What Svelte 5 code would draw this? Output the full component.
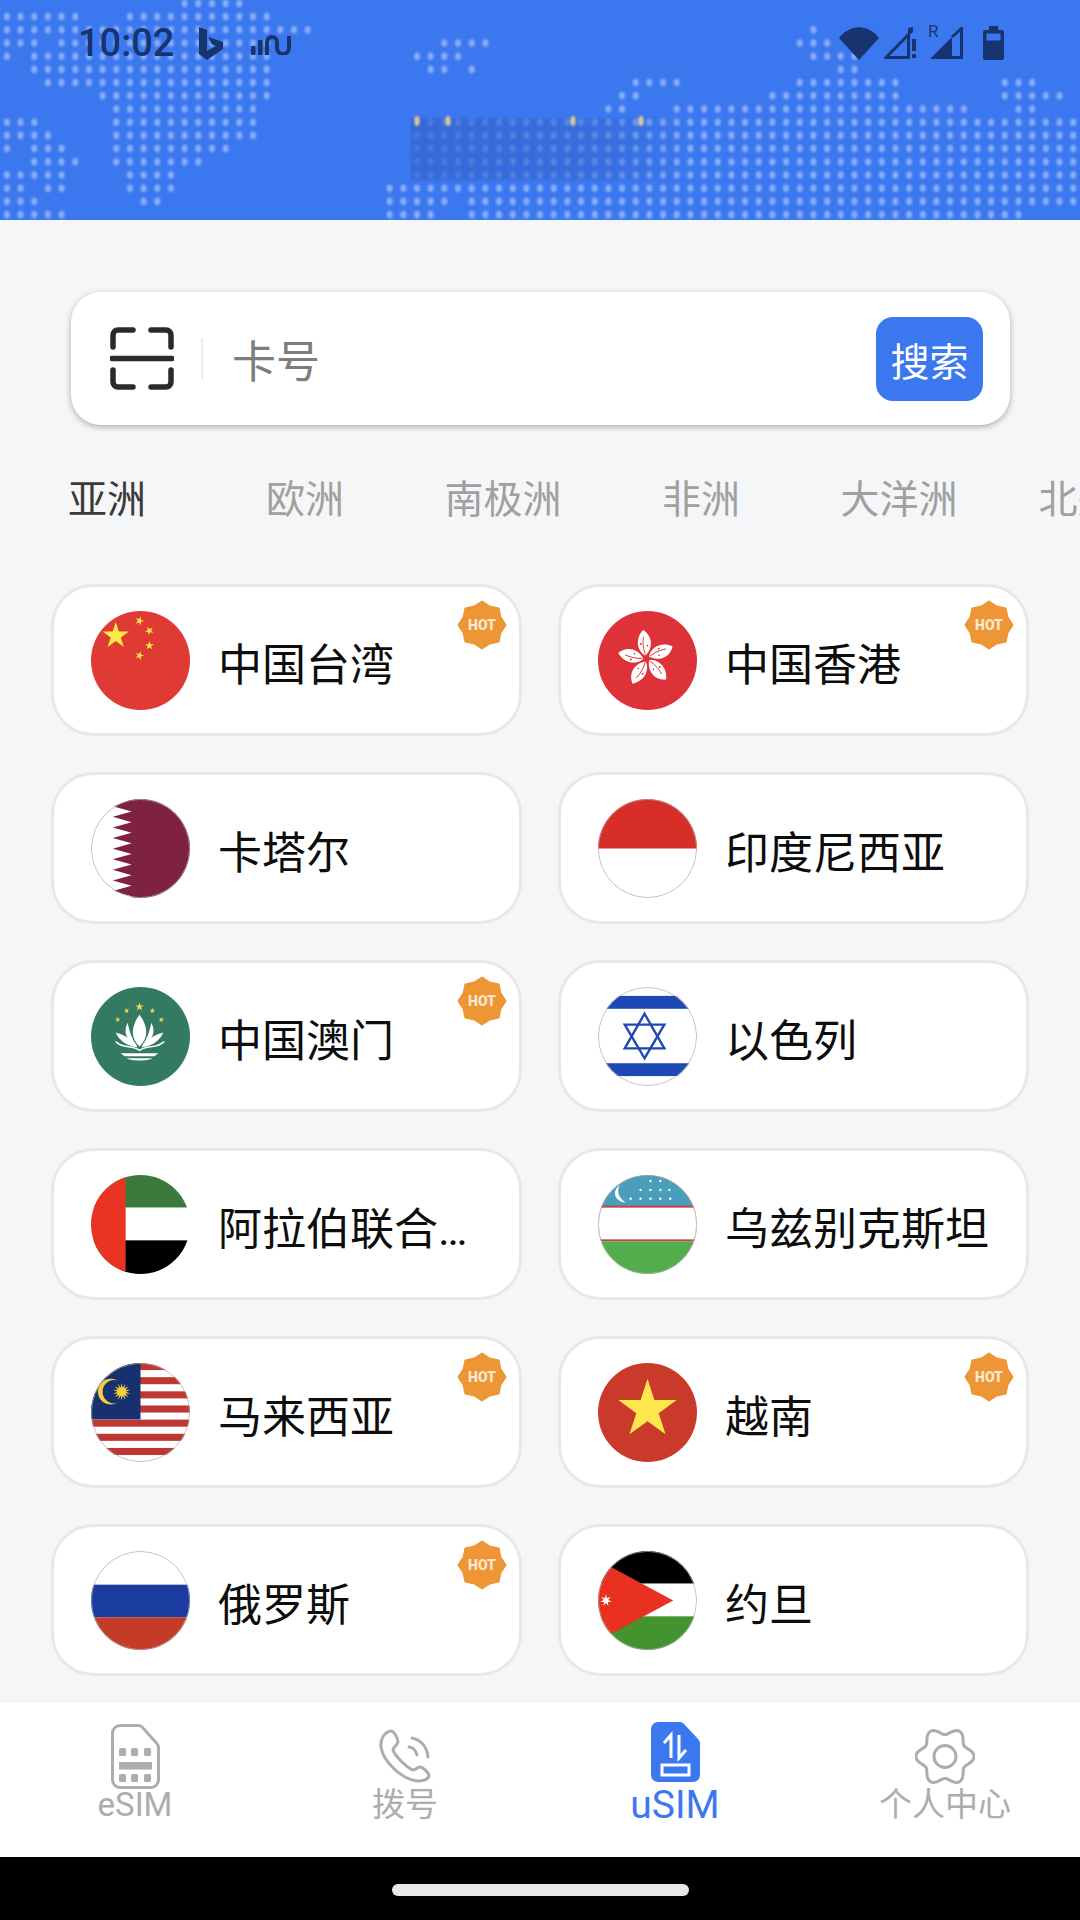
<script>
    const tabs = ["亚洲", "欧洲", "南极洲", "非洲", "大洋洲", "北美洲"];

    const countries = [
        { name: "中国台湾", flag: "cn", hot: true },
        { name: "中国香港", flag: "hk", hot: true },
        { name: "卡塔尔", flag: "qa" },
        { name: "印度尼西亚", flag: "id" },
        { name: "中国澳门", flag: "mo", hot: true },
        { name: "以色列", flag: "il" },
        { name: "阿拉伯联合酋长国", flag: "ae" },
        { name: "乌兹别克斯坦", flag: "uz" },
        { name: "马来西亚", flag: "my", hot: true },
        { name: "越南", flag: "vn", hot: true },
        { name: "俄罗斯", flag: "ru", hot: true },
        { name: "约旦", flag: "jo" },
    ];

    // dot map: one list of [first, last] column ranges per row
    const mapRows = [
        [[13, 17]],
        [[0, 5], [9, 19]],
        [[0, 22], [59, 59]],
        [[0, 2], [4, 19], [32, 35], [58, 60]],
        [[0, 0], [2, 19], [30, 33], [59, 62]],
        [[2, 19], [31, 32], [34, 34], [61, 62]],
        [[3, 19], [46, 49], [58, 65], [73, 75]],
        [[7, 19], [45, 46], [56, 65], [73, 77]],
        [[8, 18], [44, 45], [49, 70], [74, 75]],
        [[0, 2], [8, 18], [30, 78]],
        [[0, 3], [8, 18], [30, 78]],
        [[0, 0], [2, 4], [8, 16], [30, 78]],
        [[2, 5], [8, 14], [30, 78]],
        [[0, 4], [9, 12], [30, 78]],
        [[0, 1], [3, 4], [9, 12], [28, 78]],
        [[0, 2], [10, 11], [28, 32], [34, 78]],
        [[0, 4], [28, 31], [34, 74]],
    ];

    const dots = [];
    mapRows.forEach((ranges, row) => {
        for (const [from, to] of ranges) {
            for (let col = from; col <= to; col++) {
                dots.push({ x: 6.9 + col * 13.67, y: 3.4 + row * 13.2 });
            }
        }
    });

    function star(cx, cy, r, turn = 0) {
        const pts = [];
        for (let i = 0; i < 10; i++) {
            const a = ((i * 36 + turn - 90) * Math.PI) / 180;
            const d = i % 2 ? r * 0.382 : r;
            pts.push(`${(cx + d * Math.cos(a)).toFixed(2)},${(cy + d * Math.sin(a)).toFixed(2)}`);
        }
        return pts.join(" ");
    }

    function burst(cx, cy, outer, inner, points) {
        const pts = [];
        for (let i = 0; i < points * 2; i++) {
            const a = (i * Math.PI) / points - Math.PI / 2;
            const d = i % 2 ? inner : outer;
            pts.push(`${(cx + d * Math.cos(a)).toFixed(2)},${(cy + d * Math.sin(a)).toFixed(2)}`);
        }
        return pts.join(" ");
    }

    function gearPath() {
        let d = "";
        for (let i = 0; i < 120; i++) {
            const a = (i * 3 * Math.PI) / 180;
            const r = 25.5 + 3.6 * Math.cos(6 * a);
            d += `${i ? "L" : "M"}${(30 + r * Math.cos(a)).toFixed(2)} ${(29.5 + r * Math.sin(a)).toFixed(2)}`;
        }
        return d + "Z";
    }

    const qatarEdge = (() => {
        const pts = ["100,0", "41,0"];
        for (let i = 0; i < 9; i++) {
            const top = 2 + i * 10.7;
            pts.push(`22,${top + 5.35}`, `41,${top + 10.7}`);
        }
        pts.push("41,100", "100,100");
        return pts.join(" ");
    })();

    const uzStars = [
        [53, 6], [63, 6],
        [43, 15], [53, 15], [63, 15], [72, 15],
        [33, 24], [43, 24], [53, 24], [63, 24], [73, 24],
    ];
</script>

{#snippet flagArt(code)}
    <svg class="flag" viewBox="0 0 100 100">
        {#if code === "cn"}
            <rect width="100" height="100" fill="#df3a33" />
            <polygon points={star(25, 25, 14)} fill="#fbe946" />
            <polygon points={star(49, 10, 4.6, 20)} fill="#fbe946" />
            <polygon points={star(59, 20, 4.6, 45)} fill="#fbe946" />
            <polygon points={star(59, 35, 4.6, 0)} fill="#fbe946" />
            <polygon points={star(49, 45, 4.6, 20)} fill="#fbe946" />
        {:else if code === "hk"}
            <rect width="100" height="100" fill="#dd3237" />
            {#each [0, 72, 144, 216, 288] as turn}
                <g transform="translate(49 48) rotate({turn - 3})">
                    <path d="M-1-3C-9-8-11-20-2-29C7-23 8-11-1-3Z" fill="#fff" />
                    <path d="M-1-4C-3-11-3-16-2-22" fill="none" stroke="#dd3237" stroke-width=".9" />
                    <circle cx="-5" cy="-15" r="1" fill="#dd3237" />
                    <circle cx="1.500" cy="-13" r=".8" fill="#dd3237" />
                </g>
            {/each}
        {:else if code === "qa"}
            <rect width="100" height="100" fill="#fff" />
            <polygon points={qatarEdge} fill="#7f2240" />
        {:else if code === "id"}
            <rect width="100" height="100" fill="#fff" />
            <rect width="100" height="50" fill="#d72e27" />
        {:else if code === "mo"}
            <rect width="100" height="100" fill="#347a62" />
            <polygon points={star(49, 20, 4.6)} fill="#f3d84b" />
            <polygon points={star(36, 24, 3)} fill="#f3d84b" />
            <polygon points={star(62, 24, 3)} fill="#f3d84b" />
            <polygon points={star(27, 33, 3)} fill="#f3d84b" />
            <polygon points={star(71, 33, 3)} fill="#f3d84b" />
            <g fill="#fff">
                <path d="M49 28C40 40 40 52 49 60C58 52 58 40 49 28Z" />
                <path d="M37 36C32 45 36 55 47 60C41 52 39 45 37 36Z" />
                <path d="M61 36C66 45 62 55 51 60C57 52 59 45 61 36Z" />
                <path d="M25 46C29 55 37 60 47 61C42 54 34 48 25 46Z" />
                <path d="M73 46C69 55 61 60 51 61C56 54 64 48 73 46Z" />
                <path d="M30 67H68L64 70H34Z" />
                <path d="M36 72H62C58 75 40 75 36 72Z" />
            </g>
            <path d="M25 55C32 63 41 58 49 64C57 58 66 63 74 55" fill="none" stroke="#fff" stroke-width="1.6" />
        {:else if code === "il"}
            <rect width="100" height="100" fill="#fff" />
            <rect y="9" width="100" height="13" fill="#1e48b4" />
            <rect y="77" width="100" height="13" fill="#1e48b4" />
            <g fill="none" stroke="#1e48b4" stroke-width="2.4">
                <polygon points="47,27 67,62 27,62" />
                <polygon points="47,72 67,38 27,38" />
            </g>
        {:else if code === "ae"}
            <rect width="100" height="33" fill="#3a7a3c" />
            <rect y="33" width="100" height="33" fill="#fff" />
            <rect y="66" width="100" height="34" fill="#000" />
            <rect width="35" height="100" fill="#ea3423" />
        {:else if code === "uz"}
            <rect width="100" height="32" fill="#4a9dbb" />
            <rect y="31" width="100" height="36" fill="#c2453f" />
            <rect y="33" width="100" height="32" fill="#fff" />
            <rect y="67" width="100" height="33" fill="#54ad4c" />
            <path d="M22 10C14 16 16 26 28 28C20 22 19 16 22 10Z" fill="#fff" />
            {#each uzStars as [x, y]}
                <circle cx={x} cy={y} r="1.2" fill="#fff" />
            {/each}
        {:else if code === "my"}
            <rect width="100" height="100" fill="#fff" />
            {#each [0, 1, 2, 3, 4, 5, 6] as i}
                <rect y={i * 14.3} width="100" height="7.15" fill="#bf3733" />
            {/each}
            <rect width="50" height="57" fill="#17306f" />
            <circle cx="20" cy="29" r="13" fill="#f5cf3c" />
            <circle cx="23.500" cy="29" r="11.800" fill="#17306f" />
            <polygon points={burst(31, 29, 9, 4.2, 14)} fill="#f5cf3c" />
        {:else if code === "vn"}
            <rect width="100" height="100" fill="#c93a2b" />
            <polygon points={star(50, 47, 31)} fill="#fce84a" />
        {:else if code === "ru"}
            <rect width="100" height="34" fill="#fff" />
            <rect y="34" width="100" height="33" fill="#1a3ba0" />
            <rect y="67" width="100" height="33" fill="#c43b28" />
        {:else if code === "jo"}
            <rect width="100" height="33" fill="#000" />
            <rect y="33" width="100" height="33" fill="#fff" />
            <rect y="66" width="100" height="34" fill="#43932f" />
            <polygon points="0,9 76,50 0,91" fill="#e8321f" />
            <polygon points={burst(8, 50, 6, 2.4, 7)} fill="#fff" />
        {/if}
        {#if ["qa", "id", "il", "uz", "my", "ru", "jo"].includes(code)}
            <circle cx="50" cy="50" r="49.6" fill="none" stroke="#aaa" stroke-width=".8" />
        {/if}
    </svg>
{/snippet}

<div class="page">
    <header class="top">
        <svg class="map" viewBox="0 0 1080 220" width="1080" height="220">
            <defs>
                <linearGradient id="smear" x1="0" x2="1" y1="0" y2="0">
                    <stop offset="0" stop-color="#3564cf" stop-opacity=".75" />
                    <stop offset=".7" stop-color="#3564cf" stop-opacity=".5" />
                    <stop offset="1" stop-color="#3564cf" stop-opacity="0" />
                </linearGradient>
            </defs>
            {#each dots as d}
                <ellipse cx={d.x} cy={d.y} rx="3" ry="3.8" fill="#8aaef8" />
            {/each}
            <rect x="411" y="118" width="280" height="62" fill="url(#smear)" />
            {#each [417, 448, 573, 641] as x}
                <ellipse cx={x} cy="121" rx="2.6" ry="5" fill="#e0c89a" />
            {/each}
        </svg>

        <div class="status">
            <span class="time">10:02</span>
            <svg class="bing" width="24" height="33" viewBox="0 0 24 33">
                <path d="M0 0 8 3V24L17 19 12.5 17 9.5 10 24 15V22L8 33 0 27Z" fill="currentColor" />
            </svg>
            <svg class="pulse" width="42" height="20" viewBox="0 0 42 20">
                <rect y="11" width="4.5" height="9" rx="1" fill="currentColor" />
                <rect x="7" y="5" width="4.5" height="15" rx="1" fill="currentColor" />
                <path d="M16 20V7A5 5 0 0 1 26 7V13A6 6 0 0 0 38 13V1" fill="none" stroke="currentColor" stroke-width="4" />
            </svg>

            <div class="status-right">
                <svg width="40" height="33" viewBox="0 0 40 33">
                    <path d="M20 33 0 11C11-3.500 29-3.500 40 11Z" fill="currentColor" />
                </svg>
                <svg class="gap-4" width="34" height="32" viewBox="0 0 34 32">
                    <path d="M25 7 2 30.500H24.500V7" fill="none" stroke="currentColor" stroke-width="3" />
                    <path d="M24 1 29 0V5L24 9Z" fill="currentColor" />
                    <rect x="28" y="12" width="4" height="12" fill="currentColor" />
                    <rect x="28" y="27" width="4" height="4" fill="currentColor" />
                </svg>
                <div class="roaming">
                    <span>R</span>
                    <svg width="33" height="32" viewBox="0 0 33 32">
                        <path d="M0 32 22 10V32Z" fill="currentColor" />
                        <path d="M22 10 31.500 1.500V30.500H22" fill="none" stroke="currentColor" stroke-width="3" />
                    </svg>
                </div>
                <svg class="gap-20" width="21" height="34" viewBox="0 0 21 34">
                    <path d="M6 0H15V4H19A2 2 0 0 1 21 6V32A2 2 0 0 1 19 34H2A2 2 0 0 1 0 32V6A2 2 0 0 1 2 4H6Z" fill="currentColor" />
                    <rect x="3.500" y="7.500" width="14" height="7" fill="#3b78f0" />
                </svg>
            </div>
        </div>
    </header>

    <div class="search">
        <svg class="scan" width="64" height="63" viewBox="0 0 64 63">
            <path d="M23 3H8A5 5 0 0 0 3 8V20M41 3H56A5 5 0 0 1 61 8V20M23 60H8A5 5 0 0 1 3 55V43M41 60H56A5 5 0 0 0 61 55V43" fill="none" stroke="#2a2a2a" stroke-width="5.500" stroke-linecap="round" />
            <path d="M2 31.500H62" stroke="#2a2a2a" stroke-width="5.500" stroke-linecap="round" />
        </svg>
        <span class="divider"></span>
        <span class="placeholder">卡号</span>
        <button class="go">搜索</button>
    </div>

    <nav class="tabs">
        {#each tabs as tab, i}
            <span class="tab" class:active={i === 0}>{tab}</span>
        {/each}
    </nav>

    <div class="grid">
        {#each countries as c}
            <div class="card">
                {@render flagArt(c.flag)}
                <span class="name">{c.name}</span>
                {#if c.hot}
                    <svg class="hot" width="50" height="50" viewBox="0 0 50 50">
                        <polygon points={burst(25, 25, 23.500, 20, 8)} fill="#ee9535" stroke="#ee9535" stroke-width="2" stroke-linejoin="round" />
                        <text x="25" y="30">HOT</text>
                    </svg>
                {/if}
            </div>
        {/each}
    </div>

    <footer class="bar">
        <div class="item">
            <div class="icon">
                <svg width="49" height="65" viewBox="0 0 49 65">
                    <path d="M9 1.500H27C29 1.500 30 2 31 3L45.500 19C47 20.500 47.500 22 47.500 24V56A7.500 7.500 0 0 1 40 63.500H9A7.500 7.500 0 0 1 1.500 56V9A7.500 7.500 0 0 1 9 1.500Z" fill="none" stroke="#adadad" stroke-width="3" />
                    <g fill="#adadad">
                        <rect x="8" y="24" width="7" height="8" rx="1.500" />
                        <rect x="20" y="24" width="7" height="8" rx="1.500" />
                        <rect x="33" y="24" width="7" height="8" rx="1.500" />
                        <rect x="8" y="38" width="33" height="7.500" />
                        <rect x="8" y="50" width="7" height="8" rx="1.500" />
                        <rect x="20" y="50" width="7" height="8" rx="1.500" />
                        <rect x="33" y="50" width="7" height="8" rx="1.500" />
                    </g>
                </svg>
            </div>
            <span class="label">eSIM</span>
        </div>
        <div class="item">
            <div class="icon">
                <svg width="52" height="54" viewBox="0 0 52 54" fill="none" stroke="#adadad" stroke-width="3" stroke-linecap="round">
                    <path d="M12 2C6 3 1 9 2 18C4 32 22 50 38 52C44 52 49 50 50 47C50 44 44 38 41 38C38 38 37 41 34 41C28 39 16 27 14 21C14 18 18 17 19 13C19 9 15 2 12 2Z" />
                    <path d="M33 9C42 11 48 18 49 28" />
                    <path d="M30 18C34 18 37 22 38 26" />
                </svg>
            </div>
            <span class="label">拨号</span>
        </div>
        <div class="item">
            <div class="icon raised">
                <svg width="49" height="60" viewBox="0 0 49 60">
                    <path d="M7 0H29C31 0 32 1 33 2L47 17C48.500 18.500 49 20 49 22V53A7 7 0 0 1 42 60H7A7 7 0 0 1 0 53V7A7 7 0 0 1 7 0Z" fill="#3b78f0" />
                    <path d="M20 36V13L13 21M28 13V36L35 28" fill="none" stroke="#fff" stroke-width="3" />
                    <rect x="11" y="43" width="27" height="10" fill="none" stroke="#fff" stroke-width="3" />
                </svg>
            </div>
            <span class="label big">uSIM</span>
        </div>
        <div class="item">
            <div class="icon">
                <svg width="60" height="59" viewBox="0 0 60 59" fill="none" stroke="#adadad" stroke-width="3">
                    <path d={gearPath()} />
                    <circle cx="30" cy="29.500" r="11" />
                </svg>
            </div>
            <span class="label">个人中心</span>
        </div>
    </footer>

    <div class="gesture"><span></span></div>
</div>

<style>
    :global(body) {
        margin: 0;
    }

    .page {
        width: 1080px;
        height: 1920px;
        display: flex;
        flex-direction: column;
        overflow: hidden;
        background: #f5f6f8;
        font-family: Roboto, "Noto Sans CJK SC", sans-serif;
    }

    .top {
        position: relative;
        height: 220px;
        flex: none;
        background: #3b78f0;
        overflow: hidden;
    }

    .map {
        position: absolute;
        inset: 0;
        filter: blur(0.9px);
    }

    .status {
        position: relative;
        display: flex;
        align-items: center;
        height: 36px;
        padding: 25px 76px 0 78px;
        color: #17346f;
    }

    .time {
        font-size: 38px;
        font-weight: 500;
        line-height: 36px;
    }

    .bing {
        margin-left: 25px;
    }

    .pulse {
        margin-left: 28px;
        margin-top: 4px;
    }

    .status-right {
        margin-left: auto;
        display: flex;
        align-items: center;
    }

    .gap-4 {
        margin-left: 5px;
    }

    .roaming {
        position: relative;
        margin-left: 12px;
        width: 33px;
        height: 32px;
    }

    .roaming span {
        position: absolute;
        left: -2px;
        top: -5px;
        font-size: 17px;
        line-height: 18px;
    }

    .gap-20 {
        margin-left: 20px;
    }

    .search {
        flex: none;
        display: flex;
        align-items: center;
        box-sizing: border-box;
        width: 939px;
        height: 133px;
        margin: 72px 0 0 71px;
        padding: 0 27px 0 39px;
        background: #fff;
        border-radius: 30px;
        box-shadow: 0 2px 6px rgba(0, 0, 0, 0.3);
    }

    .divider {
        width: 2px;
        height: 41px;
        margin-left: 27px;
        background: #ececec;
    }

    .placeholder {
        margin-left: 29px;
        font-size: 44px;
        color: #7d7d7d;
    }

    .go {
        margin-left: auto;
        width: 107px;
        height: 84px;
        padding: 0;
        border: none;
        border-radius: 17px;
        background: #3b78f0;
        color: #fff;
        font: inherit;
        font-size: 39px;
    }

    .tabs {
        flex: none;
        display: flex;
        height: 60px;
        margin: 45px 0 0 8px;
        white-space: nowrap;
    }

    .tab {
        flex: none;
        width: 198px;
        text-align: center;
        font-size: 39px;
        line-height: 60px;
        color: #a0a0a0;
    }

    .tab.active {
        color: #3a3a3a;
    }

    .grid {
        flex: none;
        display: grid;
        grid-template-columns: 471px 471px;
        grid-auto-rows: 152px;
        gap: 36px;
        margin: 54px 0 0 51px;
    }

    .card {
        position: relative;
        box-sizing: border-box;
        display: flex;
        align-items: center;
        gap: 28px;
        padding-left: 37px;
        background: #fff;
        border: 3px solid #e8e8ea;
        border-radius: 42px;
    }

    .flag {
        flex: none;
        width: 99px;
        height: 99px;
        border-radius: 50%;
    }

    .name {
        width: 270px;
        padding-top: 11px;
        font-size: 44px;
        line-height: 60px;
        color: #0d0d0d;
        white-space: nowrap;
        overflow: hidden;
        text-overflow: ellipsis;
    }

    .hot {
        position: absolute;
        top: 13px;
        right: 12px;
    }

    .hot text {
        font-family: Roboto, sans-serif;
        font-size: 14px;
        font-weight: 900;
        fill: #fbe6cf;
        text-anchor: middle;
    }

    .bar {
        flex: none;
        display: grid;
        grid-template-columns: repeat(4, 270px);
        box-sizing: border-box;
        height: 154px;
        margin-top: auto;
        padding-top: 19px;
        background: #fff;
    }

    .item {
        display: flex;
        flex-direction: column;
        align-items: center;
    }

    .icon {
        height: 68px;
        display: flex;
        align-items: center;
    }

    .icon.raised {
        align-items: flex-start;
    }

    .label {
        height: 30px;
        font-size: 33px;
        line-height: 30px;
        color: #adadad;
        white-space: nowrap;
    }

    .label.big {
        font-size: 39px;
        color: #3b78f0;
    }

    .gesture {
        flex: none;
        height: 63px;
        display: flex;
        justify-content: center;
        padding-top: 27px;
        box-sizing: border-box;
        background: #000;
    }

    .gesture span {
        width: 297px;
        height: 12px;
        border-radius: 6px;
        background: #e8e8e8;
    }
</style>
